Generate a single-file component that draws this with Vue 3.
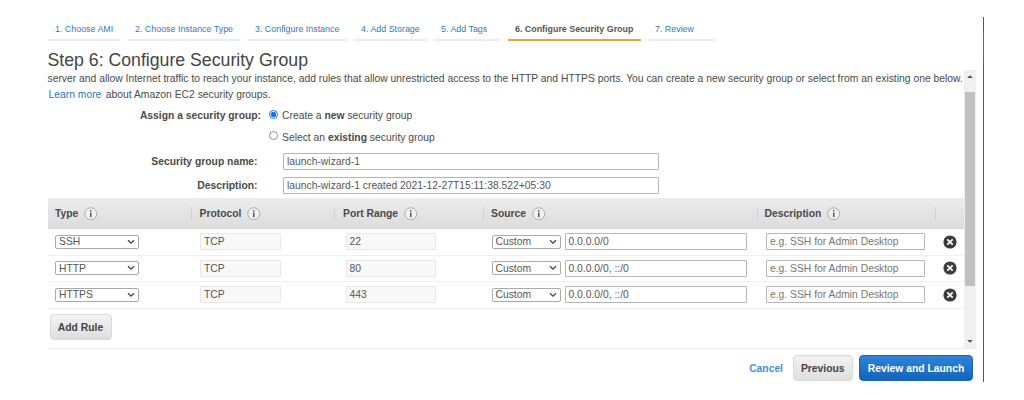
<script setup>
const steps = [
  { label: '1. Choose AMI', width: 73 },
  { label: '2. Choose Instance Type', width: 113 },
  { label: '3. Configure Instance', width: 99 },
  { label: '4. Add Storage', width: 73 },
  { label: '5. Add Tags', width: 67 },
  { label: '6. Configure Security Group', width: 133, active: true },
  { label: '7. Review', width: 67 },
]
const columns = ['Type', 'Protocol', 'Port Range', 'Source', 'Description', '']
const rules = [
  { type: 'SSH', port: '22', source: '0.0.0.0/0' },
  { type: 'HTTP', port: '80', source: '0.0.0.0/0, ::/0' },
  { type: 'HTTPS', port: '443', source: '0.0.0.0/0, ::/0' },
]
</script>

<template>
  <div class="page">
    <main class="wizard">
      <nav class="steps">
        <a v-for="s in steps" :key="s.label" class="step" :class="{ active: s.active }" :style="{ width: s.width + 'px' }">{{ s.label }}</a>
      </nav>
      <h1>Step 6: Configure Security Group</h1>
      <section class="panel">
        <div class="content">
          <p class="intro intro-first">server and allow Internet traffic to reach your instance, add rules that allow unrestricted access to the HTTP and HTTPS ports. You can create a new security group or select from an existing one below.</p>
          <p class="intro"><a class="learn">Learn more</a><span class="about">about Amazon EC2 security groups.</span></p>
          <div class="form">
            <div class="line assign">
              <span class="label wide">Assign a security group:</span>
              <i class="radio on"></i><span class="choice">Create a <b>new</b> security group</span>
            </div>
            <div class="line existing">
              <span class="label wide"></span>
              <i class="radio"></i><span class="choice">Select an <b>existing</b> security group</span>
            </div>
            <div class="line field">
              <span class="label">Security group name:</span><span class="box">launch-wizard-1</span>
            </div>
            <div class="line field">
              <span class="label">Description:</span><span class="box created">launch-wizard-1 created 2021-12-27T15:11:38.522+05:30</span>
            </div>
          </div>
          <div class="head cols">
            <div v-for="c in columns" :key="c" class="th">
              <template v-if="c">
                <span>{{ c }}</span>
                <svg class="info" viewBox="0 0 14 14">
                  <circle cx="7" cy="7" r="6.2" fill="#f1f1f1" stroke="#aaa" />
                  <path d="M7 5.8v4.8" fill="none" stroke="#555" stroke-width="1.6" />
                  <circle cx="7" cy="4" r="0.9" fill="#555" />
                </svg>
              </template>
            </div>
          </div>
          <div v-for="r in rules" :key="r.type" class="row cols">
            <div class="cell">
              <span class="select">{{ r.type }}<svg viewBox="0 0 8 6"><path d="M1 1.2l3 3 3-3" /></svg></span>
            </div>
            <div class="cell"><span class="box off protocol">TCP</span></div>
            <div class="cell port-cell"><span class="box off port">{{ r.port }}</span></div>
            <div class="cell source-cell">
              <span class="select custom">Custom<svg viewBox="0 0 8 6"><path d="M1 1.2l3 3 3-3" /></svg></span>
              <span class="box source">{{ r.source }}</span>
            </div>
            <div class="cell"><span class="box hint">e.g. SSH for Admin Desktop</span></div>
            <div class="cell">
              <svg class="remove" viewBox="0 0 14 14">
                <circle cx="7" cy="7" r="6.6" fill="#3c3c3c" />
                <path d="M4.3 4.3l5.4 5.4M9.7 4.3l-5.4 5.4" stroke="#fff" stroke-width="1.7" />
              </svg>
            </div>
          </div>
          <button class="btn add">Add Rule</button>
        </div>
        <div class="scrollbar">
          <svg class="arrow" viewBox="0 0 12 22"><path d="M3.2 8L6 5.2 8.8 8z" fill="#505050" /></svg>
          <div class="thumb"></div>
          <svg class="arrow down" viewBox="0 0 12 14"><path d="M3.2 6L6 8.8 8.8 6z" fill="#505050" /></svg>
        </div>
      </section>
      <footer>
        <a class="cancel">Cancel</a>
        <button class="btn previous">Previous</button>
        <button class="btn primary">Review and Launch</button>
      </footer>
    </main>
    <div class="edge"></div>
  </div>
</template>

<style>
body { background: #fff; }
</style>

<style scoped>
* { box-sizing: border-box; }
.page {
  width: 1024px; height: 400px; display: flex; overflow: hidden; background: #fff;
  font-family: "Liberation Sans", Arial, sans-serif; font-size: 10.33px; color: #4a4a4a;
}
.wizard { width: 935.5px; padding-left: 47.5px; box-sizing: content-box; flex: none; }
.steps { display: flex; gap: 7px; height: 41px; padding-top: 17px; }
.step {
  height: 24px; flex: none; padding-left: 7.5px; line-height: 24px; font-size: 8.88px;
  color: #3479bd; border-bottom: 2px solid #ededed; white-space: nowrap;
}
.step.active { color: #555; font-weight: bold; border-bottom-color: #f7a135; }
h1 { margin: 9px 0 0; height: 20px; line-height: 21px; font-size: 17.7px; font-weight: normal; color: #444; white-space: nowrap; }
.panel { display: flex; width: 929px; height: 279px; border-bottom: 1px solid #eee; }
.content { width: 916.5px; flex: none; }
.intro { margin: 0; height: 15.5px; line-height: 15.5px; white-space: nowrap; }
.intro-first { padding-top: 1px; }
.intro + .intro { padding-top: 1px; }
.learn { color: #2a76c6; margin: 0 4.5px 0 1px; }
.form { height: 97px; padding-top: 4px; }
.line { display: flex; align-items: center; white-space: nowrap; }
.assign { height: 21px; }
.existing { height: 22px; margin-bottom: 1px; }
.label { width: 210px; text-align: right; font-weight: bold; flex: none; }
.label.wide { width: 213.5px; }
.radio { width: 9px; height: 9px; margin: 0 4.5px 3px 7.5px; border: 1px solid #8a8a8a; border-radius: 50%; }
.radio.on { border-color: #1a73e8; background: radial-gradient(circle, #1a73e8 0 2.5px, #fff 3px); }
.field { height: 23.5px; position: relative; top: 1px; }
.field .box { width: 375.5px; margin-left: 25.5px; }
.box {
  display: block; height: 17px; line-height: 16px; padding-left: 3px; border: 1px solid #b5b5b5;
  border-radius: 1px; background: #fff; color: #555; white-space: nowrap; flex: none;
}
.cols { display: grid; grid-template-columns: 143px 143.5px 149px 273.5px 178.5px 29px; }
.head { height: 31px; padding: 0; background: linear-gradient(#ececec, #dcdcdc); }
.th { display: flex; align-items: center; padding-left: 9px; font-weight: bold; }
.th:not(:first-child) { background: linear-gradient(#d2d2d2, #d2d2d2) 0 50% / 1px 14px no-repeat; }
.th:first-child { padding-left: 7.5px; }
.th:nth-child(4) { padding-left: 8px; }
.th:nth-child(5) { padding-left: 8px; }
.info { width: 13.5px; height: 13.5px; margin-left: 6px; }
.row { height: 26.5px; border-bottom: 1.5px solid #eef1f2; }
.cell { display: flex; align-items: center; padding-left: 9.5px; }
.cell:first-child { padding-left: 7.5px; }
.port-cell { padding-left: 11.5px; }
.source-cell { padding-left: 8.5px; }
.select {
  display: flex; justify-content: space-between; align-items: center; width: 83.5px; height: 14px;
  padding: 0 3px; border: 1px solid #aaa; border-radius: 2px; line-height: 13px; background: #fff; color: #555;
}
.select svg { width: 8px; height: 6px; fill: none; stroke: #444; stroke-width: 1.3; }
.custom { width: 69px; margin-right: 4px; }
.off { background: #f8f8f8; border-color: #e7e7e7; }
.protocol { width: 81px; }
.port { width: 90px; }
.source { width: 182px; }
.hint { width: 159px; color: #777; }
.remove { width: 14px; height: 14px; margin-left: -2px; }
.btn {
  display: block; height: 26px; padding: 0; border: 1px solid #d9d9d9; border-radius: 4px;
  background: linear-gradient(#f3f3f3, #dedede); color: #444; font: bold 10.33px "Liberation Sans", Arial, sans-serif; white-space: nowrap;
}
.add { width: 62px; margin: 5.5px 0 0 2px; }
.scrollbar { width: 12px; background: #f0f0f0; display: flex; flex-direction: column; }
.arrow { width: 12px; height: 22px; flex: none; }
.arrow.down { height: 14px; margin-top: auto; }
.thumb { height: 194px; width: 10px; margin-left: 1px; background: #c1c1c1; }
footer { display: flex; align-items: center; height: 38px; width: 925.5px; justify-content: flex-end; }
.cancel { color: #3f8fdf; font-weight: bold; margin-right: 9.5px; }
.previous { width: 60.5px; margin-right: 6px; }
.primary { width: 114px; color: #fff; border-color: #1767b8; background: linear-gradient(#2f83da, #1464b9); }
.edge {
  width: 1px; height: 365px; margin-top: 17px; flex: none;
  background: linear-gradient(#6b4a5c 0 15px, #b83b92 15px 40px, #6b4a5c 50px);
}
</style>
